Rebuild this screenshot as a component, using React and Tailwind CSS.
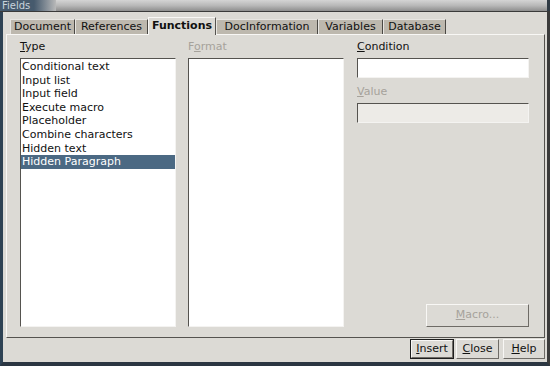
import React from "react";

const tabs = [
  { label: "Document", w: "w-[65px]" },
  { label: "References", w: "w-[73px]" },
  { label: "Functions", w: "w-[68px]", active: true },
  { label: "DocInformation", w: "w-[102px]" },
  { label: "Variables", w: "w-[65px]" },
  { label: "Database", w: "w-[63px]" },
];

const types = [
  "Conditional text",
  "Input list",
  "Input field",
  "Execute macro",
  "Placeholder",
  "Combine characters",
  "Hidden text",
  "Hidden Paragraph",
];

function Sunken({ className = "", children }) {
  return (
    <div
      className={
        "border border-t-[#55534f] border-l-[#55534f] border-b-[#f4f3f1] border-r-[#f4f3f1] " +
        className
      }
    >
      {children}
    </div>
  );
}

function Button({ children, className = "", disabled }) {
  return (
    <div
      className={
        "flex items-center justify-center border border-t-[#f8f7f5] border-l-[#f8f7f5] border-b-[#6e6b66] border-r-[#6e6b66] bg-[#dcdad5] " +
        (disabled ? "text-[#a6a29b] " : "text-[#111] ") +
        className
      }
    >
      {children}
    </div>
  );
}

export default function App() {
  return (
    <div
      className="w-[550px] h-[366px] flex flex-col bg-[#dcdad5] overflow-hidden text-[11px] text-[#111]"
      style={{ fontFamily: '"DejaVu Sans", Verdana, sans-serif' }}
    >
      {/* title bar */}
      <div className="h-[12px] flex shrink-0 border-b border-[#3a3a3a]">
        <div className="w-[34px] bg-[#465a6d] text-[#c9d3dc] text-[10px] leading-[11px] pl-[2px]">
          Fields
        </div>
        <div className="w-[22px] bg-gradient-to-r from-[#465a6d] to-[#b9b9b9]" />
        <div className="flex-1 bg-gradient-to-b from-[#d4d4d4] via-[#b8b8b8] to-[#8e8e8e] border-r-[3px] border-[#2f3a44]" />
      </div>

      {/* window body */}
      <div className="flex-1 flex flex-col border-l-[3px] border-r-[3px] border-b-[4px] border-l-[#2e4254] border-r-[#3b3b3b] border-b-[#2b3642] pt-[5px] pl-[3px] pr-[2px]">
        {/* tab strip */}
        <div className="flex items-end h-[17px] pl-[4px]">
          {tabs.map((t) =>
            t.active ? (
              <div
                key={t.label}
                className={`${t.w} h-[18px] -mb-[1px] relative z-10 flex items-center justify-center bg-[#dcdad5] border-t border-l border-t-[#f8f7f5] border-l-[#f8f7f5] border-r border-r-[#55534f] font-bold`}
              >
                {t.label}
              </div>
            ) : (
              <div
                key={t.label}
                className={`${t.w} h-[15px] flex items-center justify-center bg-[#bdb8ae] border-t border-l border-t-[#e8e6e2] border-l-[#e8e6e2] border-r border-r-[#4a4844]`}
              >
                {t.label}
              </div>
            )
          )}
        </div>

        {/* tab panel */}
        <div className="h-[304px] border border-t-[#f8f7f5] border-l-[#f8f7f5] border-b-[#55534f] border-r-[#55534f] flex pl-[13px] pt-[5px] pb-[10px] pr-[13px] gap-[12px]">
          {/* Type */}
          <div className="w-[156px] flex flex-col">
            <div className="h-[18px] leading-[14px]">
              <u>T</u>ype
            </div>
            <Sunken className="flex-1 bg-white pt-[1px]">
              {types.map((t, i) => (
                <div
                  key={t}
                  className={
                    "h-[13.6px] leading-[13.6px] pl-[1px] whitespace-nowrap " +
                    (i === types.length - 1 ? "bg-[#4b6983] text-white" : "")
                  }
                >
                  {t}
                </div>
              ))}
            </Sunken>
          </div>

          {/* Format */}
          <div className="w-[156px] flex flex-col">
            <div className="h-[18px] leading-[14px] text-[#a6a29b]">
              F<u>o</u>rmat
            </div>
            <Sunken className="flex-1 bg-white" />
          </div>

          {/* Condition / Value */}
          <div className="w-[172px] ml-[1px] flex flex-col">
            <div className="h-[18px] leading-[14px]">
              <u>C</u>ondition
            </div>
            <Sunken className="h-[20px] bg-white" />
            <div className="h-[25px] leading-[14px] pt-[7px] text-[#a6a29b]">
              <u>V</u>alue
            </div>
            <Sunken className="h-[20px] bg-[#edebe7]" />
            <div className="flex-1" />
            <div className="flex justify-end">
              <Button disabled className="w-[103px] h-[23px]">
                <span>
                  <u>M</u>acro...
                </span>
              </Button>
            </div>
          </div>
        </div>

        {/* dialog buttons */}
        <div className="flex justify-end items-center gap-[2px] pt-[1px]">
          <div className="border border-[#1e1e1e] p-0">
            <Button className="w-[42px] h-[18px]">
              <span>
                <u>I</u>nsert
              </span>
            </Button>
          </div>
          <Button className="w-[43px] h-[20px]">
            <span>
              <u>C</u>lose
            </span>
          </Button>
          <Button className="w-[42px] h-[20px] ml-[2px]">
            <span>
              <u>H</u>elp
            </span>
          </Button>
        </div>
      </div>
    </div>
  );
}
